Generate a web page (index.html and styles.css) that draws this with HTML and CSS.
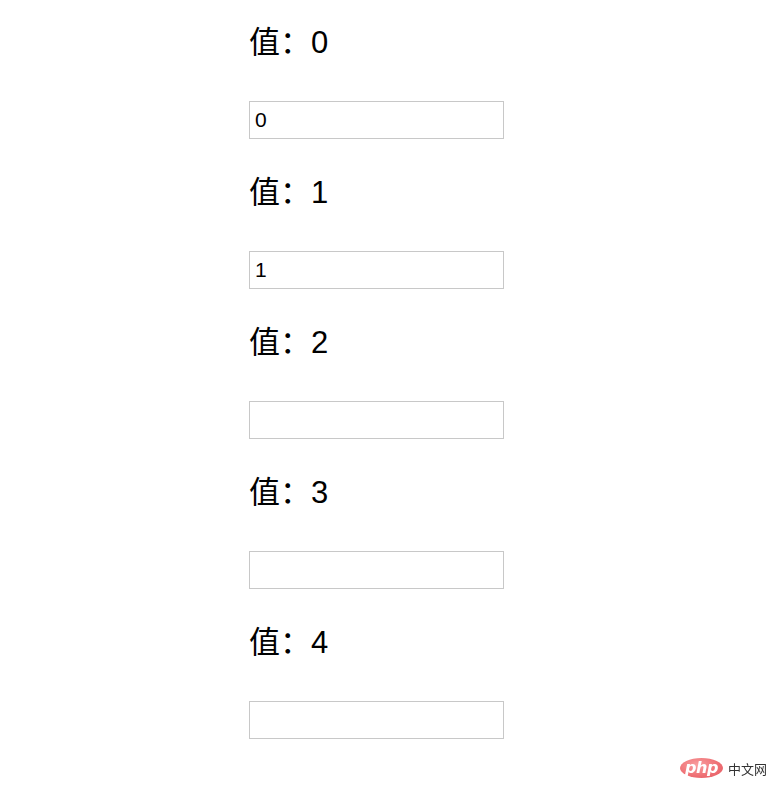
FILE: index.html
```html
<!DOCTYPE html>
<html lang="zh">
<head>
<meta charset="utf-8">
<title>值</title>
<link rel="stylesheet" href="styles.css">
</head>
<body>
<div class="list">
  <div class="item">
    <h2 class="label">值：0</h2>
    <input class="field" type="text" value="0">
  </div>
  <div class="item">
    <h2 class="label">值：1</h2>
    <input class="field" type="text" value="1">
  </div>
  <div class="item">
    <h2 class="label">值：2</h2>
    <input class="field" type="text" value="">
  </div>
  <div class="item">
    <h2 class="label">值：3</h2>
    <input class="field" type="text" value="">
  </div>
  <div class="item">
    <h2 class="label">值：4</h2>
    <input class="field" type="text" value="">
  </div>
</div>
<div class="watermark">
  <span class="php-logo">php</span>
  <span class="wm-text">中文网</span>
</div>
</body>
</html>
```

FILE: styles.css
```css
html, body {
  margin: 0;
  padding: 0;
  background: #fff;
}
body {
  font-family: "Liberation Sans", "Noto Sans CJK SC", sans-serif;
  color: #000;
}
.list {
  padding-top: 23px;
  padding-left: 249px;
  display: flex;
  flex-direction: column;
}
.item {
  display: flex;
  flex-direction: column;
  align-items: flex-start;
  margin-bottom: 34px;
}
.label {
  margin: 0 0 38px 0;
  font-size: 31px;
  font-weight: normal;
  line-height: 40px;
  height: 40px;
}
.field {
  box-sizing: border-box;
  width: 255px;
  height: 38px;
  margin: 0;
  padding: 0 5px;
  border: 1px solid #c8c8c8;
  font-family: "Liberation Sans", sans-serif;
  font-size: 21px;
  color: #000;
  outline: none;
  background: #fff;
}
.watermark {
  position: fixed;
  right: 12px;
  bottom: 22px;
  display: flex;
  align-items: center;
  gap: 5px;
}
.php-logo {
  display: inline-flex;
  align-items: center;
  justify-content: center;
  width: 43px;
  height: 20px;
  border-radius: 50%;
  background: radial-gradient(ellipse at 40% 35%, #f9a0a0 0%, #ee6e73 60%, #e35a62 100%);
  color: #fff;
  font-family: "DejaVu Sans", sans-serif;
  font-style: italic;
  font-weight: bold;
  font-size: 16px;
  line-height: 1;
  letter-spacing: -0.5px;
}
.wm-text {
  font-family: "Noto Sans CJK SC", sans-serif;
  font-size: 13px;
  color: #333;
}
```
